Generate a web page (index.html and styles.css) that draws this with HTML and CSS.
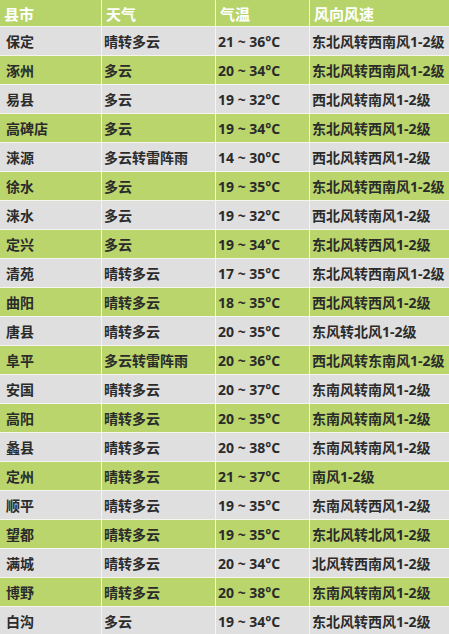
FILE: index.html
```html
<!DOCTYPE html>
<html lang="zh">
<head>
<meta charset="utf-8">
<title>天气</title>
<link rel="stylesheet" href="styles.css">
</head>
<body>
<div class="table">
  <div class="cell head c1">县市</div><div class="cell head">天气</div><div class="cell head">气温</div><div class="cell head">风向风速</div>

  <div class="cell g c1">保定</div><div class="cell g">晴转多云</div><div class="cell g">21 ~ 36°C</div><div class="cell g">东北风转西南风1-2级</div>
  <div class="cell v c1">涿州</div><div class="cell v">多云</div><div class="cell v">20 ~ 34°C</div><div class="cell v">东北风转西南风1-2级</div>
  <div class="cell g c1">易县</div><div class="cell g">多云</div><div class="cell g">19 ~ 32°C</div><div class="cell g">西北风转南风1-2级</div>
  <div class="cell v c1">高碑店</div><div class="cell v">多云</div><div class="cell v">19 ~ 34°C</div><div class="cell v">东北风转西风1-2级</div>
  <div class="cell g c1">涞源</div><div class="cell g">多云转雷阵雨</div><div class="cell g">14 ~ 30°C</div><div class="cell g">西北风转西风1-2级</div>
  <div class="cell v c1">徐水</div><div class="cell v">多云</div><div class="cell v">19 ~ 35°C</div><div class="cell v">东北风转西南风1-2级</div>
  <div class="cell g c1">涞水</div><div class="cell g">多云</div><div class="cell g">19 ~ 32°C</div><div class="cell g">西北风转南风1-2级</div>
  <div class="cell v c1">定兴</div><div class="cell v">多云</div><div class="cell v">19 ~ 34°C</div><div class="cell v">东北风转西风1-2级</div>
  <div class="cell g c1">清苑</div><div class="cell g">晴转多云</div><div class="cell g">17 ~ 35°C</div><div class="cell g">东北风转西南风1-2级</div>
  <div class="cell v c1">曲阳</div><div class="cell v">晴转多云</div><div class="cell v">18 ~ 35°C</div><div class="cell v">西北风转西风1-2级</div>
  <div class="cell g c1">唐县</div><div class="cell g">晴转多云</div><div class="cell g">20 ~ 35°C</div><div class="cell g">东风转北风1-2级</div>
  <div class="cell v c1">阜平</div><div class="cell v">多云转雷阵雨</div><div class="cell v">20 ~ 36°C</div><div class="cell v">西北风转东南风1-2级</div>
  <div class="cell g c1">安国</div><div class="cell g">晴转多云</div><div class="cell g">20 ~ 37°C</div><div class="cell g">东南风转南风1-2级</div>
  <div class="cell v c1">高阳</div><div class="cell v">晴转多云</div><div class="cell v">20 ~ 35°C</div><div class="cell v">东南风转南风1-2级</div>
  <div class="cell g c1">蠡县</div><div class="cell g">晴转多云</div><div class="cell g">20 ~ 38°C</div><div class="cell g">东南风转南风1-2级</div>
  <div class="cell v c1">定州</div><div class="cell v">晴转多云</div><div class="cell v">21 ~ 37°C</div><div class="cell v">南风1-2级</div>
  <div class="cell g c1">顺平</div><div class="cell g">晴转多云</div><div class="cell g">19 ~ 35°C</div><div class="cell g">东南风转西风1-2级</div>
  <div class="cell v c1">望都</div><div class="cell v">晴转多云</div><div class="cell v">19 ~ 35°C</div><div class="cell v">东北风转北风1-2级</div>
  <div class="cell g c1">满城</div><div class="cell g">晴转多云</div><div class="cell g">20 ~ 34°C</div><div class="cell g">北风转西南风1-2级</div>
  <div class="cell v c1">博野</div><div class="cell v">晴转多云</div><div class="cell v">20 ~ 38°C</div><div class="cell v">东南风转南风1-2级</div>
  <div class="cell g c1">白沟</div><div class="cell g">多云</div><div class="cell g">19 ~ 34°C</div><div class="cell g">东北风转西风1-2级</div>
</div>
</body>
</html>
```

FILE: styles.css
```css
html, body {
  margin: 0;
  padding: 0;
  background: #ffffff;
}
body {
  width: 449px;
  height: 634px;
  overflow: hidden;
  font-family: "Open Sans", "Noto Sans CJK SC", sans-serif;
}
.table {
  display: grid;
  grid-template-columns: 101px 113px 93px 1fr;
  grid-template-rows: 26px;
  grid-auto-rows: 28px;
  gap: 1px;
  background: #f4f6ee;
}
.cell {
  display: flex;
  align-items: center;
  padding-left: 2px;
  font-size: 14px;
  font-weight: 700;
  color: #2b2b2b;
  white-space: nowrap;
  overflow: hidden;
}
.cell.c1 {
  padding-left: 6px;
}
.head {
  background: #b7d46b;
  color: #ffffff;
  font-size: 15px;
  padding-left: 4px;
}
.head.c1 {
  padding-left: 4px;
}
.g {
  background: #dfdfdf;
}
.v {
  background: #b9d56c;
}
```
